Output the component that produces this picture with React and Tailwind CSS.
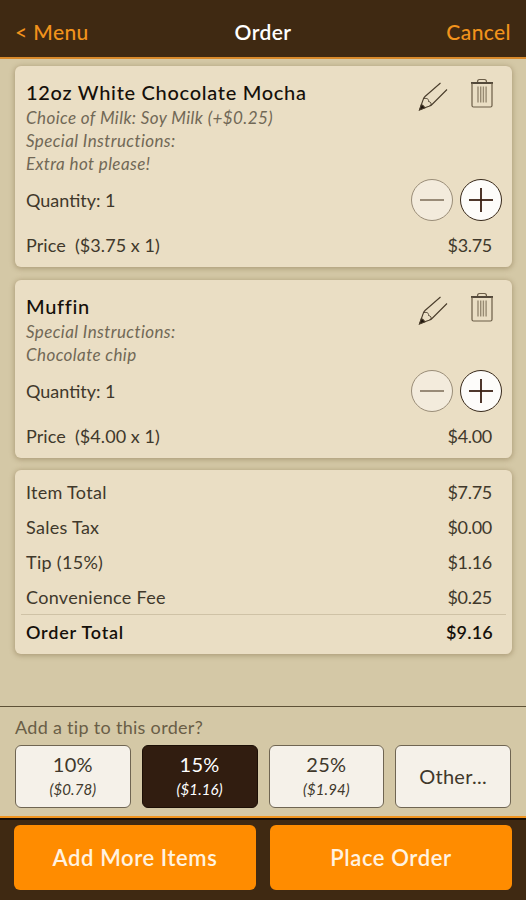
import { useState } from 'react'

const items = [
  {
    id: 1,
    name: '12oz White Chocolate Mocha',
    notes: ['Choice of Milk: Soy Milk (+$0.25)', 'Special Instructions:', 'Extra hot please!'],
    price: '3.75',
  },
  {
    id: 2,
    name: 'Muffin',
    notes: ['Special Instructions:', 'Chocolate chip'],
    price: '4.00',
  },
]

const totals = [
  { label: 'Item Total', value: '$7.75' },
  { label: 'Sales Tax', value: '$0.00' },
  { label: 'Tip (15%)', value: '$1.16' },
  { label: 'Convenience Fee', value: '$0.25' },
]

const tips = [
  { label: '10%', amount: '($0.78)' },
  { label: '15%', amount: '($1.16)' },
  { label: '25%', amount: '($1.94)' },
  { label: 'Other...' },
]

const PencilIcon = () => (
  <svg width="30" height="30" viewBox="0 0 30 30" fill="none" stroke="#4a3d2c" strokeWidth="1.1">
    <path d="M22.500 2 7 15.500Q5.500 17 5 19L1.700 28.500 11 25.300Q13 24.500 14.500 23L29 8.500" />
    <path d="M6 17.500c3-.5 5 .5 4.500 3 2.300.3 3.300 2 2.300 4" strokeWidth="0.9" />
    <path d="M3.400 23.500 1.500 29 7 26.700Q5.500 24.500 3.400 23.500Z" fill="#1d140c" />
  </svg>
)

const TrashIcon = () => (
  <svg width="24" height="32" viewBox="0 0 24 32" fill="none" stroke="#6b5d47">
    <path d="M7.500 5q0-2.500 2-2.500h5q2 0 2 2.500" strokeWidth="1.200" />
    <path d="M1 6h22" stroke="#2e2418" strokeWidth="1.600" />
    <path d="M2 6v22.500q0 1.500 1.500 1.500h17q1.500 0 1.500-1.500V6" strokeWidth="1.200" />
    <path d="M8 9.500v16M10.700 9.500v16M13.400 9.500v16M16.100 9.500v16" stroke="#978a72" strokeWidth="1.400" />
  </svg>
)

const RoundButton = ({ disabled, plus }) => (
  <button
    disabled={disabled}
    className={`flex size-[42px] items-center justify-center rounded-full border ${
      disabled ? 'border-[#9a8d78] bg-[#f3ebdc]' : 'border-[#38291a] bg-[#fdfcfa]'
    }`}
  >
    <svg width="26" height="26" viewBox="0 0 26 26" stroke={disabled ? '#8f806c' : '#3a2013'} strokeWidth="1.8">
      <path d="M1 13h24" />
      {plus && <path d="M13 1v24" />}
    </svg>
  </button>
)

const Card = ({ className = '', children }) => (
  <section className={`rounded-md bg-[#eadec4] shadow-[0_1px_5px_1px_rgba(120,100,60,0.4)] ${className}`}>
    {children}
  </section>
)

const OrderItem = ({ item }) => (
  <Card className="pt-[13px] pr-2.5 pl-[11px]">
    <div className="flex justify-between">
      <div>
        <h2 className="mb-px h-[26px] text-[20px] leading-[26px] font-medium tracking-[0.7px] text-[#15100a]">
          {item.name}
        </h2>
        {item.notes.map((note) => (
          <p key={note} className="h-[23px] text-[17px] leading-[23px] tracking-[0.4px] text-[#716856] italic">
            {note}
          </p>
        ))}
      </div>
      <div className="flex h-8 items-start gap-[22px] pt-0.5 pr-2">
        <button>
          <PencilIcon />
        </button>
        <button className="-mt-1">
          <TrashIcon />
        </button>
      </div>
    </div>
    <div className="mt-0.5 flex h-[46px] items-center justify-between">
      <span className="tracking-normal">Quantity: 1</span>
      <div className="flex gap-[7px]">
        <RoundButton disabled />
        <RoundButton plus />
      </div>
    </div>
    <div className="flex h-11 items-center justify-between pr-2.5">
      <span className="tracking-[0.05px] whitespace-pre">{`Price  ($${item.price} x 1)`}</span>
      <span className="-tracking-[0.3px]">${item.price}</span>
    </div>
  </Card>
)

export default function App() {
  const [selected, setSelected] = useState('15%')

  return (
    <div className="flex h-[900px] w-[526px] flex-col bg-[#d4c8a6] font-[Lato,'Liberation_Sans',sans-serif] text-[18px] tracking-[0.3px] text-[#40382b]">
      <header className="flex h-[59px] items-end justify-between border-b-2 border-[#d98a2b] bg-[#3f2912] px-[15px] pb-2.5 text-[21px] leading-[30px] tracking-[0.4px] text-[#f2931c]">
        <button className="w-24 text-left font-medium">&lt; Menu</button>
        <h1 className="font-semibold text-white">Order</h1>
        <button className="w-24 text-right font-medium">Cancel</button>
      </header>

      <main className="flex flex-1 flex-col pt-[7px] pr-3.5 pl-[15px]">
        {items.map((item) => (
          <div key={item.id} className="mb-[13px] last-of-type:mb-3">
            <OrderItem item={item} />
          </div>
        ))}
        <Card className="px-1.5 pt-[5px] pb-0.5">
          {totals.map((row) => (
            <div key={row.label} className="flex h-[35px] items-center justify-between pr-3.5 pl-[5px]">
              <span>{row.label}</span>
              <span className="-tracking-[0.3px]">{row.value}</span>
            </div>
          ))}
          <div className="-mt-px flex h-[38px] items-center justify-between border-t border-[#cfc2a6] pr-[13px] pb-[3px] pl-[5px] font-semibold tracking-[0.8px] text-[#15100a]">
            <span>Order Total</span>
            <span className="tracking-[0.2px]">$9.16</span>
          </div>
        </Card>
      </main>

      <section className="h-[110px] border-t border-[#5e5237] pt-2 pr-[15px] pl-[15px]">
        <p className="leading-6 text-[#6a5e46]">Add a tip to this order?</p>
        <div className="mt-1.5 grid grid-cols-4 gap-[11px]">
          {tips.map((tip) => (
            <button
              key={tip.label}
              onClick={() => setSelected(tip.label)}
              className={`flex h-[63px] flex-col items-center justify-center rounded-md border ${
                selected === tip.label
                  ? 'border-[#1c0f06] bg-[#311d10] text-white'
                  : 'border-[#6f6552] bg-[#f5f1e9]'
              }`}
            >
              <span className="text-[20px] leading-[25px]">{tip.label}</span>
              {tip.amount && <span className="text-[15px] leading-6 tracking-[0.1px] italic">{tip.amount}</span>}
            </button>
          ))}
        </div>
      </section>

      <footer className="grid h-[84px] grid-cols-2 gap-3.5 border-t-2 border-[#f0941f] bg-[#3f2912] px-3.5 pt-[7px] text-[22px] tracking-[0.6px] shadow-[inset_0_2px_0_#160c04]">
        <button className="h-[65px] rounded-md bg-[#ff8c00] pb-px font-semibold text-[#fff3e0]">Add More Items</button>
        <button className="h-[65px] rounded-md bg-[#ff8c00] pb-px font-semibold text-[#fff3e0]">Place Order</button>
      </footer>
    </div>
  )
}
